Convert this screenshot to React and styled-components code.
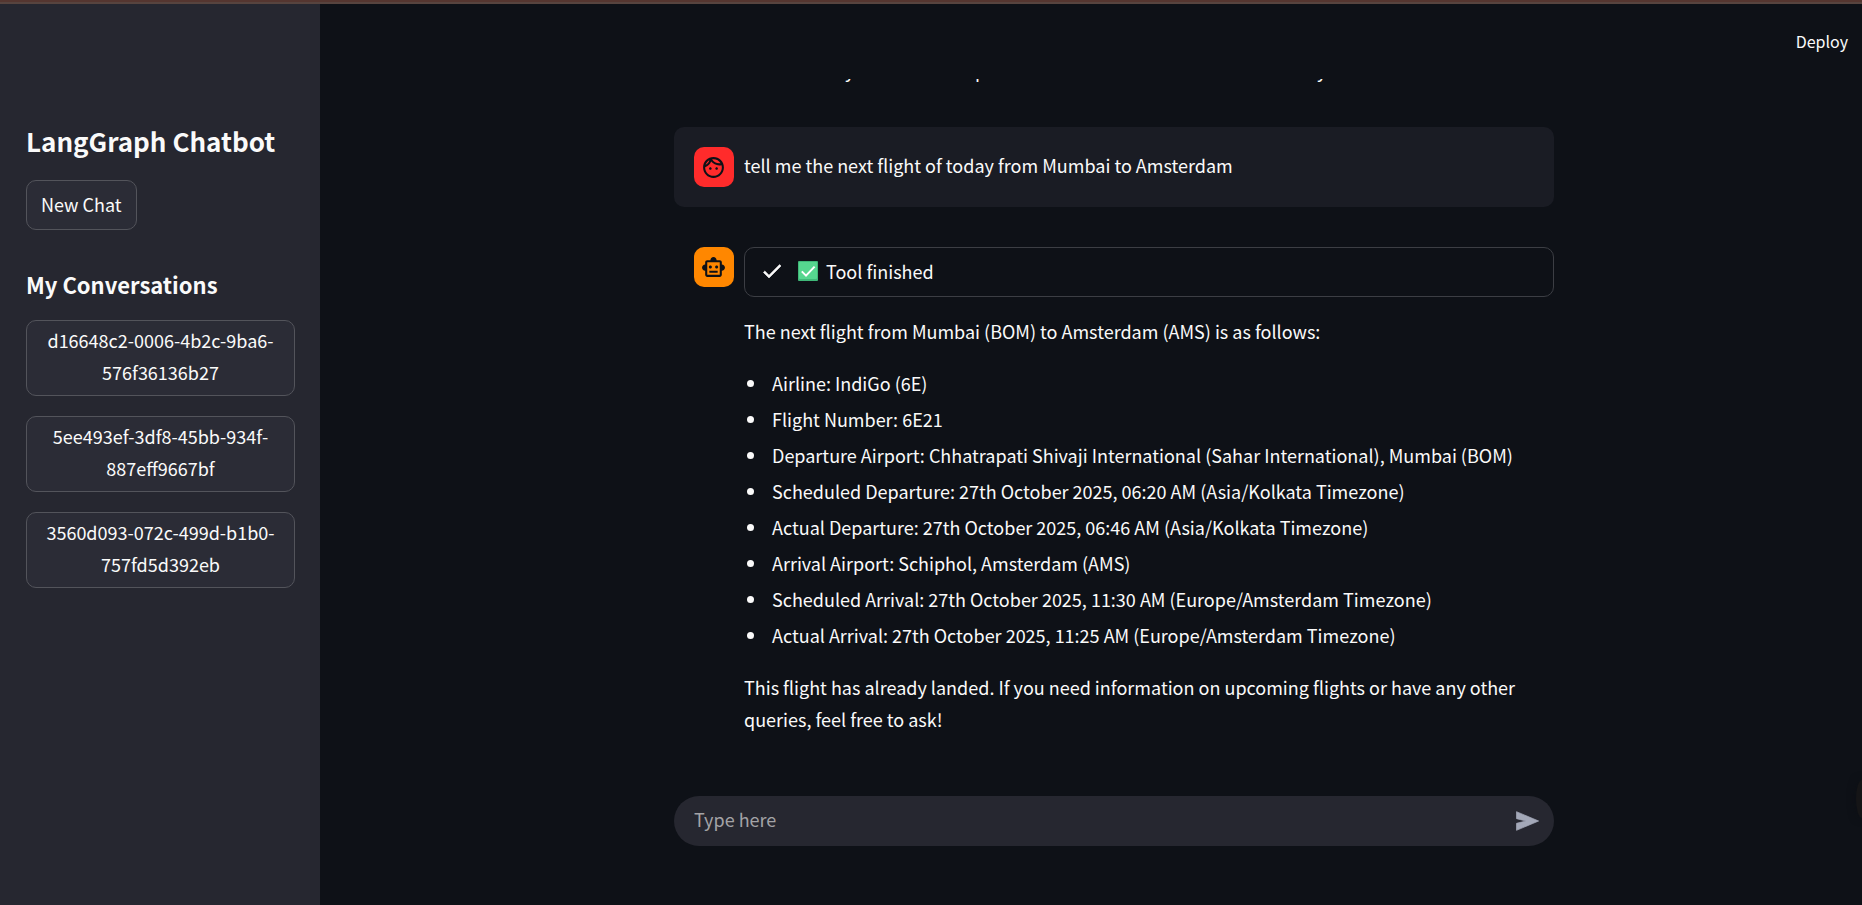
import React from "react";
import styled, { createGlobalStyle } from "styled-components";

const GlobalStyle = createGlobalStyle`
  *, *::before, *::after { box-sizing: border-box; }
  body {
    margin: 0;
    background: #0e1117;
    color: #fafafa;
    font-family: "Noto Sans CJK SC", "Open Sans", sans-serif;
    font-size: 18px;
    line-height: 32px;
  }
  h1, h2, p, ul { margin: 0; }
  button, input { font: inherit; color: inherit; }
`;

const Shell = styled.div`
  display: flex;
  flex-direction: column;
  height: 100vh;
  overflow: hidden;
`;

const WindowEdge = styled.div`
  flex: none;
  height: 4px;
  background: #553630;
  border-bottom: 2px solid #57443f;
`;

const Body = styled.div`
  flex: 1;
  min-height: 0;
  display: flex;
`;

const Sidebar = styled.aside`
  flex: none;
  width: 320px;
  padding: 119px 25px 24px 26px;
  background: #262730;
`;

const Title = styled.h1`
  font-size: 26px;
  line-height: 36px;
  font-weight: 700;
`;

const SectionTitle = styled.h2`
  margin: 39px 0 21px;
  font-size: 22px;
  line-height: 30px;
  font-weight: 700;
`;

const SidebarButton = styled.button`
  display: block;
  padding: ${(p) => (p.$wide ? "3px 15px 7px" : "7px 14px 9px")};
  width: ${(p) => (p.$wide ? "100%" : "auto")};
  border: 1px solid #53545b;
  border-radius: 10px;
  background: #2b2c36;
  cursor: pointer;
`;

const NewChat = styled(SidebarButton)`
  margin-top: 21px;
`;

const Conversations = styled.nav`
  display: flex;
  flex-direction: column;
  gap: 20px;
`;

const Main = styled.main`
  position: relative;
  flex: 1;
  min-width: 0;
  display: flex;
  flex-direction: column;
`;

const Header = styled.header`
  flex: none;
  display: flex;
  align-items: center;
  justify-content: flex-end;
  height: 75px;
  padding: 0 14px 2px 0;
`;

const DeployButton = styled.button`
  padding: 0;
  border: 0;
  background: none;
  font-size: 16px;
  line-height: 24px;
  cursor: pointer;
`;

const Thread = styled.section`
  flex: 1;
  min-height: 0;
  padding-left: 46px;
  overflow: hidden;
`;

const Column = styled.div`
  width: 100%;
  max-width: 880px;
  margin: 0 auto;
`;

const ScrolledLine = styled.p`
  display: grid;
  grid-template-columns: 130px 342px auto;
  height: 32px;
  margin: -25px 0 41px;
  padding-left: 171px;
`;

const Message = styled.article`
  display: flex;
  align-items: ${(p) => (p.$user ? "center" : "flex-start")};
  gap: 10px;
  padding: 20px ${(p) => (p.$user ? 20 : 0)}px 20px 20px;
  border-radius: 10px;
  background: ${(p) => (p.$user ? "#1a1c24" : "transparent")};
  margin-bottom: 20px;
`;

const UserText = styled.p`
  padding-bottom: 4px;
`;

const Avatar = styled.div`
  flex: none;
  display: flex;
  align-items: center;
  width: 40px;
  height: 40px;
  padding-left: 7px;
  border-radius: 10px;
  background: ${(p) => p.$color};
  color: #0e1117;
`;

const Content = styled.div`
  flex: 1;
  min-width: 0;
  display: flex;
  flex-direction: column;
  gap: 18px;
`;

const Answer = styled.div`
  display: flex;
  flex-direction: column;
  gap: 20px;
`;

const Status = styled.div`
  display: flex;
  align-items: center;
  height: 50px;
  padding: 0 15px 2px;
  border: 1px solid #3c3e44;
  border-radius: 10px;
`;

const StatusEmoji = styled.span`
  display: flex;
  margin: 0 8px 0 14px;
`;

const Details = styled.ul`
  display: flex;
  flex-direction: column;
  gap: 4px;
  padding-left: 3px;
  list-style: none;
`;

const Detail = styled.li`
  display: flex;
  align-items: center;

  &::before {
    content: "";
    flex: none;
    width: 7px;
    height: 7px;
    margin-right: 18px;
    border-radius: 50%;
    background: #fafafa;
  }
`;

const Footer = styled.footer`
  flex: none;
  padding: 0 0 59px 46px;
`;

const Composer = styled.form`
  display: flex;
  align-items: center;
  width: 100%;
  max-width: 880px;
  height: 50px;
  margin: 0 auto;
  padding: 0 13px 0 20px;
  border-radius: 25px;
  background: #262730;
`;

const MessageInput = styled.input`
  flex: 1;
  min-width: 0;
  padding: 0 0 4px;
  border: 0;
  outline: 0;
  background: transparent;
  &::placeholder { color: #a3a3a6; opacity: 1; }
`;

const SendButton = styled.button`
  display: flex;
  padding: 0;
  border: 0;
  background: none;
  color: #a3a8b8;
  cursor: pointer;
`;

const EdgeHandle = styled.div`
  position: absolute;
  right: 0;
  bottom: 87px;
  width: 6px;
  height: 38px;
  border-radius: 6px 0 0 6px / 19px 0 0 19px;
  background: #151517;
  box-shadow: 0 0 8px #0c0f14;
`;

const Icon = ({ size, weight = 0, children }) => (
  <svg
    width={size}
    height={size}
    viewBox="0 0 24 24"
    fill="currentColor"
    stroke={weight ? "currentColor" : "none"}
    strokeWidth={weight}
    strokeLinejoin="round"
    aria-hidden="true"
  >
    {children}
  </svg>
);

const conversations = [
  "d16648c2-0006-4b2c-9ba6-576f36136b27",
  "5ee493ef-3df8-45bb-934f-887eff9667bf",
  "3560d093-072c-499d-b1b0-757fd5d392eb",
];

const details = [
  "Airline: IndiGo (6E)",
  "Flight Number: 6E21",
  "Departure Airport: Chhatrapati Shivaji International (Sahar International), Mumbai (BOM)",
  "Scheduled Departure: 27th October 2025, 06:20 AM (Asia/Kolkata Timezone)",
  "Actual Departure: 27th October 2025, 06:46 AM (Asia/Kolkata Timezone)",
  "Arrival Airport: Schiphol, Amsterdam (AMS)",
  "Scheduled Arrival: 27th October 2025, 11:30 AM (Europe/Amsterdam Timezone)",
  "Actual Arrival: 27th October 2025, 11:25 AM (Europe/Amsterdam Timezone)",
];

export default function App() {
  return (
    <Shell>
      <GlobalStyle />
      <WindowEdge />
      <Body>
        <Sidebar>
          <Title>LangGraph Chatbot</Title>
          <NewChat type="button">New Chat</NewChat>
          <SectionTitle>My Conversations</SectionTitle>
          <Conversations>
            {conversations.map((id) => (
              <SidebarButton key={id} type="button" $wide>{id}</SidebarButton>
            ))}
          </Conversations>
        </Sidebar>
        <Main>
          <Header>
            <DeployButton type="button">Deploy</DeployButton>
          </Header>
          <Thread>
            <Column>
              <ScrolledLine aria-hidden="true">
                <span>y</span>
                <span>p</span>
                <span>y</span>
              </ScrolledLine>
              <Message $user>
                <Avatar $color="#ff2b2b">
                  <Icon size={25}>
                    <path d="M10.25 13c0 .69-.56 1.25-1.25 1.25S7.75 13.69 7.75 13s.56-1.25 1.25-1.25 1.25.56 1.25 1.25zM15 11.75c-.69 0-1.25.56-1.25 1.25s.56 1.25 1.25 1.25 1.25-.56 1.25-1.25-.56-1.25-1.25-1.25zm7 .25c0 5.52-4.48 10-10 10S2 17.52 2 12 6.48 2 12 2s10 4.48 10 10zM10.66 4.12C12.06 6.44 14.6 8 17.5 8c.46 0 .91-.05 1.34-.12C17.44 5.56 14.9 4 12 4c-.46 0-.91.05-1.34.12zM4.42 9.47c1.71-.97 3.03-2.55 3.66-4.44C6.37 6 5.05 7.58 4.42 9.47zM20 12c0-.78-.12-1.53-.33-2.24-.7.15-1.42.24-2.17.24-3.13 0-5.92-1.44-7.76-3.69C8.69 8.87 6.6 10.88 4 11.86c.01.04 0 .09 0 .14 0 4.41 3.59 8 8 8s8-3.59 8-8z" />
                  </Icon>
                </Avatar>
                <UserText>tell me the next flight of today from Mumbai to Amsterdam</UserText>
              </Message>
              <Message>
                <Avatar $color="#ff8700">
                  <Icon size={25}>
                    <path d="M20 9V7c0-1.1-.9-2-2-2h-3c0-1.66-1.34-3-3-3S9 3.34 9 5H6c-1.1 0-2 .9-2 2v2c-1.66 0-3 1.34-3 3s1.34 3 3 3v4c0 1.1.9 2 2 2h12c1.1 0 2-.9 2-2v-4c1.66 0 3-1.34 3-3s-1.34-3-3-3zm-2 10H6V7h12v12zm-9-6c-.83 0-1.5-.67-1.5-1.5S8.17 10 9 10s1.5.67 1.5 1.5S9.83 13 9 13zm7.5-1.5c0 .83-.67 1.5-1.5 1.5s-1.5-.67-1.5-1.5.67-1.5 1.5-1.5 1.5.67 1.5 1.5zM8 15h8v2H8v-2z" />
                  </Icon>
                </Avatar>
                <Content>
                  <Status role="status">
                    <Icon size={24} weight={0.6}>
                      <path d="M9 16.17 4.83 12l-1.42 1.41L9 19 21 7l-1.41-1.41z" />
                    </Icon>
                    <StatusEmoji>
                      <svg width="20" height="20" viewBox="0 0 20 20" aria-hidden="true">
                        <rect width="20" height="20" rx="1" fill="#3fb878" />
                        <rect x="1" y="1" width="18" height="17" rx="1" fill="#56d68f" />
                        <path d="M3.8 10.4 8 14.6 16.6 5.6" fill="none" stroke="#fff" strokeWidth="2" />
                      </svg>
                    </StatusEmoji>
                    Tool finished
                  </Status>
                  <Answer>
                    <p>The next flight from Mumbai (BOM) to Amsterdam (AMS) is as follows:</p>
                    <Details>
                      {details.map((line) => (
                        <Detail key={line}>{line}</Detail>
                      ))}
                    </Details>
                    <p>
                      This flight has already landed. If you need information on upcoming flights or have any other
                      queries, feel free to ask!
                    </p>
                  </Answer>
                </Content>
              </Message>
            </Column>
          </Thread>
          <Footer>
            <Composer>
              <MessageInput type="text" placeholder="Type here" aria-label="Type here" />
              <SendButton type="button" aria-label="Send message">
                <Icon size={28} weight={0.6}>
                  <path d="M3 20v-6l8-2-8-2V4l19 8z" />
                </Icon>
              </SendButton>
            </Composer>
          </Footer>
          <EdgeHandle />
        </Main>
      </Body>
    </Shell>
  );
}
